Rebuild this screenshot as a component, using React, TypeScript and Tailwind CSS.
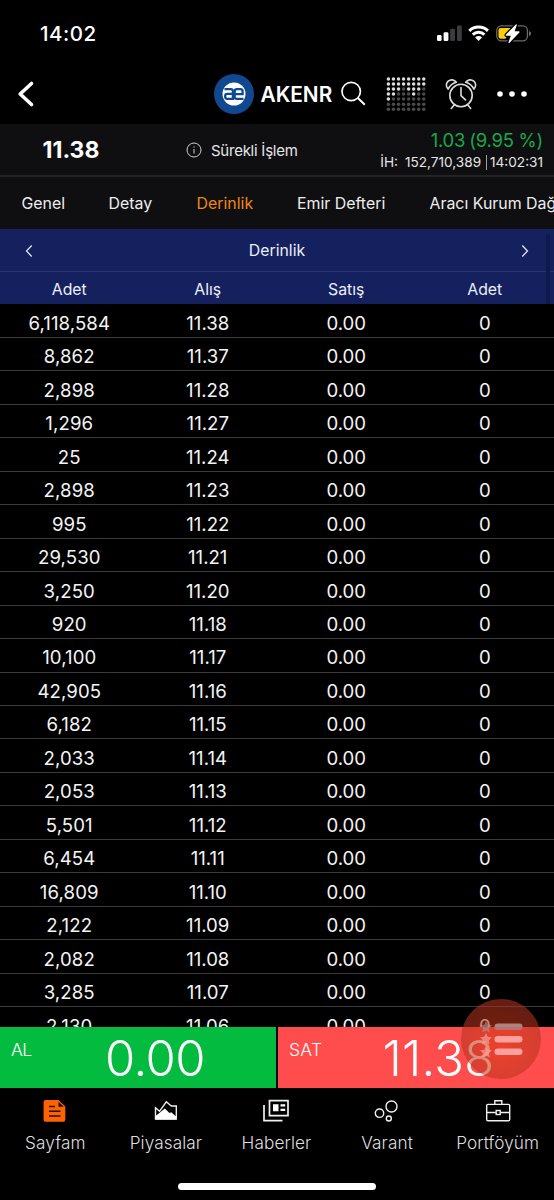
import { ReactNode } from "react";
import clsx from "clsx";

const ROWS: [string, string][] = [
  ["6,118,584", "11.38"],
  ["8,862", "11.37"],
  ["2,898", "11.28"],
  ["1,296", "11.27"],
  ["25", "11.24"],
  ["2,898", "11.23"],
  ["995", "11.22"],
  ["29,530", "11.21"],
  ["3,250", "11.20"],
  ["920", "11.18"],
  ["10,100", "11.17"],
  ["42,905", "11.16"],
  ["6,182", "11.15"],
  ["2,033", "11.14"],
  ["2,053", "11.13"],
  ["5,501", "11.12"],
  ["6,454", "11.11"],
  ["16,809", "11.10"],
  ["2,122", "11.09"],
  ["2,082", "11.08"],
  ["3,285", "11.07"],
  ["2,130", "11.06"],
];

// 1 = lit dot
const DOTS = ["11111111", "11111111", "11101110", "11000100", "10000000", "00000000", "00000000"];

const StatusBar = () => (
  <div className="flex h-[64px] items-center pt-[4px] pl-[40px]">
    <span className="w-[396px] text-[20.5px] font-medium tracking-[0.5px]">14:02</span>
    <svg width="98" height="24" viewBox="0 0 98 24" fill="none">
      <rect x="1" y="13" width="4.6" height="6" rx="1.3" fill="#fff" />
      <rect x="7.6" y="10.2" width="4.8" height="8.8" rx="1.3" fill="#fff" />
      <rect x="14.2" y="6.8" width="4.8" height="12.2" rx="1.3" fill="#3c3c3e" />
      <rect x="21" y="3.4" width="4.8" height="15.6" rx="1.3" fill="#3c3c3e" />
      <g stroke="#fff" strokeWidth="3">
        <path d="M33.3 8.8a13.6 13.6 0 0 1 18.6 0" />
        <path d="M36.8 12.6a8.4 8.4 0 0 1 11.6 0" />
      </g>
      <path d="M42.6 19 39.2 15.4a4.8 4.8 0 0 1 6.8 0z" fill="#fff" />
      <rect x="60.8" y="3.8" width="30.6" height="15" rx="4.6" stroke="#6b6b6d" strokeWidth="1.3" />
      <path d="M93 9v5c1.3-.5 2.1-1.4 2.1-2.5S94.3 9.5 93 9z" fill="#6b6b6d" />
      <path d="M64.8 6H76l-6.5 10.7h-4.7a2.3 2.3 0 0 1-2.3-2.3V8.3A2.3 2.3 0 0 1 64.8 6z" fill="#fecd0a" />
      <path
        d="M79.8 2.5 70 12.6c-.5.6-.2 1.200.5 1.200h4.300l-2.300 6.400c-.3.900.5 1.200 1.100.6l9.700-10.300c.5-.6.2-1.200-.5-1.200h-4.200l2.200-6.200c.3-.8-.4-1.200-1-.6z"
        fill="#fff"
        stroke="#000"
        strokeWidth="2.6"
        paintOrder="stroke"
      />
    </svg>
  </div>
);

const Logo = () => (
  <svg width="40" height="40" viewBox="0 0 40 40" fill="none">
    <circle cx="20" cy="20" r="20" fill="#10498f" />
    <circle cx="20" cy="20" r="11.5" fill="#fff" />
    <g stroke="#10498f" strokeWidth="2.3">
      <path d="M10.500 15.200h6.200q2.200 0 2.200 2v7.600h-5.700q-2 0-2-2v-.9q0-2 2-2h5.700" />
      <path d="M20.700 24.500v-7.200q0-2.100 2.100-2.100h3.600q2.200 0 2.200 2.100v2.800h-7.500M20.700 23q0 1.900 2 1.900h6.800" />
    </g>
  </svg>
);

const DotGrid = () => (
  <svg width="40" height="36" viewBox="0 0 40 36">
    {DOTS.map((line, y) =>
      line.split("").map((dot, x) => (
        <circle
          key={`${x}-${y}`}
          cx={2.4 + x * 5.05}
          cy={3 + y * 5.03}
          r="1.75"
          fill={dot === "1" ? "#dedede" : "#4b4b4b"}
        />
      ))
    )}
  </svg>
);

const AlarmIcon = () => (
  <svg width="32" height="32" viewBox="0 0 32 32" fill="none" stroke="#dcdcdc" strokeWidth="1.6">
    <circle cx="16" cy="17.5" r="11.2" />
    <path d="M16 9.5v8.1l4.500 4.300M9.300 26.800l-3 3.700M22.700 26.800l3 3.700" strokeLinecap="round" />
    <path
      d="M3.100 11.100C.5 8.300 1 5.100 3.200 3.200 5.800 1 9.400 1.600 11.300 4.300 7.600 5.300 4.700 7.700 3.100 11.100zM28.900 11.100c2.600-2.800 2.100-6-.1-7.900-2.600-2.200-6.200-1.600-8.100 1.100 3.700 1 6.600 3.400 8.200 6.800z"
      strokeLinejoin="round"
    />
  </svg>
);

const Header = () => (
  <div className="flex h-[60px] items-center pl-[17px]">
    <svg width="18" height="28" viewBox="0 0 18 28" fill="none">
      <path d="M14.500 3.500 3.200 14l11.300 10.500" stroke="#fff" strokeWidth="3.6" strokeLinecap="round" strokeLinejoin="round" />
    </svg>
    <div className="ml-[178.5px] flex items-center">
      <Logo />
      <span className="ml-[7px] w-[80px] pt-px text-[20.8px] font-semibold">AKENR</span>
      <svg width="26" height="26" viewBox="0 0 26 26" fill="none" stroke="#fff" strokeWidth="1.7">
        <circle cx="10.2" cy="10.5" r="9.2" />
        <path d="m16.900 17 6.900 6.700" strokeWidth="2" />
      </svg>
    </div>
    <div className="ml-[19.5px] flex items-center">
      <DotGrid />
      <div className="ml-[19px]">
        <AlarmIcon />
      </div>
      <svg className="ml-[19px]" width="32" height="8" viewBox="0 0 32 8" fill="#fff">
        <circle cx="4" cy="4" r="2.8" />
        <circle cx="16" cy="4" r="2.8" />
        <circle cx="28" cy="4" r="2.8" />
      </svg>
    </div>
  </div>
);

const PriceBar = () => (
  <div className="flex h-[53px] items-center border-b-2 border-[#242426] bg-[#0f0f11]">
    <span className="w-[142px] pt-[2px] text-center text-[23px] font-bold">11.38</span>
    <div className="ml-[44px] flex items-center gap-[9px]">
      <svg width="16" height="16" viewBox="0 0 16 16" fill="none" stroke="#cfcfcf">
        <circle cx="8" cy="8" r="7" />
        <path d="M8 7v4.500M8 4.300v1.300" />
      </svg>
      <span className="pt-[3px] text-[15px] tracking-[-0.25px] whitespace-nowrap text-[#e6e6e6]">Sürekli İşlem</span>
    </div>
    <div className="ml-auto flex flex-col items-end pt-px pr-[11px] whitespace-nowrap">
      <div className="flex gap-[4px] text-[18.5px] leading-[24px] tracking-[-0.25px] text-[#18a84a]">
        <span>1.03</span>
        <span>(9.95 %)</span>
      </div>
      <div className="flex items-center text-[13.6px] leading-[20px] text-[#e6e6e6]">
        <span>İH:</span>
        <span className="ml-[7px]">152,710,389</span>
        <span className="mr-[3px] ml-[5px] h-[15px] w-px bg-[#a0a0a0]" />
        <span>14:02:31</span>
      </div>
    </div>
  </div>
);

const Tabs = () => (
  <div className="flex h-[52px] items-center overflow-hidden bg-[#0f0f11] pt-px pl-[21.5px] text-[15.9px] whitespace-nowrap text-[#ededed]">
    <span className="w-[87px] shrink-0">Genel</span>
    <span className="w-[88px] shrink-0">Detay</span>
    <span className="w-[100.5px] shrink-0 text-[#ee8711]">Derinlik</span>
    <span className="w-[132.5px] shrink-0">Emir Defteri</span>
    <span className="shrink-0">Aracı Kurum Dağılımı</span>
  </div>
);

const Arrow = ({ className }: { className?: string }) => (
  <svg className={className} width="8" height="14" viewBox="0 0 8 14" fill="none" stroke="#dfe3f5" strokeWidth="1.3">
    <path d="M6.700 1.500 1.500 7l5.200 5.500" />
  </svg>
);

const DepthTable = () => (
  <div className="h-[798px] overflow-hidden">
    <div className="relative bg-[#14215e] text-[15.8px] text-[#eceef8]">
      <div className="flex h-[42px] items-center justify-between px-[25px] pt-px">
        <Arrow />
        <span>Derinlik</span>
        <Arrow className="rotate-180" />
      </div>
      <div className="grid h-[33px] grid-cols-4 items-center border-t border-[#27346d] pt-[4px] text-center">
        <span>Adet</span>
        <span>Alış</span>
        <span>Satış</span>
        <span>Adet</span>
      </div>
      <div className="absolute top-[5px] right-[4px] bottom-0 w-[4px] bg-[#0f194a]" />
    </div>
    <div className="pt-[0.4px]">
      {ROWS.map(([amount, price]) => (
        <div
          key={price}
          className="grid h-[33.48px] grid-cols-4 items-center border-b border-[#3a3a3a] pt-[5.4px] text-center text-[18.6px] text-[#f4f4f4]"
        >
          <span className="tracking-[0.1px]">{amount}</span>
          <span>{price}</span>
          <span>0.00</span>
          <span>0</span>
        </div>
      ))}
    </div>
  </div>
);

const TradeButton = (props: { label: string; price: string; className: string }) => (
  <div className={clsx("flex h-[61px] text-white", props.className)}>
    <span className="mt-[11px] w-[40px] text-[17.5px] leading-[24px] font-light">{props.label}</span>
    <span className="flex-1 pt-[1px] text-center text-[49px] leading-[62px] font-[350]">{props.price}</span>
  </div>
);

const Star = ({ y, fill }: { y: number; fill: string }) => (
  <path
    transform={`translate(25 ${y})`}
    d="m0-6 1.800 3.800 4.200.5-3 3 .7 4.200L0 3.500l-3.700 2 .7-4.200-3-3 4.200-.5z"
    fill={fill}
  />
);

const FloatingMenu = () => (
  <svg className="absolute top-[999px] left-[461px]" width="80" height="80" viewBox="0 0 80 80">
    <defs>
      <radialGradient id="fab" cx="50%" cy="60%" r="55%">
        <stop offset="0" stopColor="#dc3a10" stopOpacity="0.55" />
        <stop offset="1" stopColor="#b0321f" stopOpacity="0.58" />
      </radialGradient>
      <linearGradient id="bar" x1="0" y1="0" x2="0" y2="1">
        <stop offset="0.5" stopColor="#a98480" />
        <stop offset="0.5" stopColor="#c0706c" />
      </linearGradient>
    </defs>
    <circle cx="40" cy="40" r="40" fill="url(#fab)" />
    <Star y={28} fill="#a7999a99" />
    <Star y={40} fill="#ffa0a0aa" />
    <Star y={53} fill="#ffa0a0aa" />
    <rect x="33.5" y="24.5" width="28" height="6.5" rx="3.2" fill="url(#bar)" />
    <rect x="33.5" y="37" width="28" height="6.5" rx="3.2" fill="#ffa09e" />
    <rect x="33.5" y="49.5" width="28" height="6.5" rx="3.2" fill="#ffa09e" />
  </svg>
);

const NavItem = ({ label, children }: { label: string; children: ReactNode }) => (
  <div className="flex w-[110.6px] flex-col items-center">
    <svg width="28" height="24" viewBox="0 0 28 24" fill="none" stroke="#f0f0f0" strokeWidth="1.4">
      {children}
    </svg>
    <span className="mt-[8.5px] text-[17.2px] leading-[24px] font-light tracking-[0.1px] text-[#dedede]">{label}</span>
  </div>
);

const BottomNav = () => (
  <div className="h-[112px]">
    <div className="flex pt-[9.5px]">
      <NavItem label="Sayfam">
        <path d="M4.500 1h13l6.800 6.500v13.200q0 2-2 2H4.500q-1.900 0-1.900-2V3q0-2 1.900-2z" fill="#ff6200" stroke="none" />
        <path d="M17.500 2.700v5H22.700z" fill="#111" stroke="none" />
        <path d="M8 7.500h6M8 12.200h11.500M8 17h11.500" stroke="#241008" strokeWidth="1.5" />
      </NavItem>
      <NavItem label="Piyasalar">
        <path d="M3.500 20V8.800l4 3.500 6.800-9.500 5 4.200h5V20z" />
        <path d="M3.500 20v-3l3.500-2.800 5.800-4.700 4.700 4.500 1.800-.7 5 4.500V20.500H3.500z" fill="#fff" stroke="none" />
      </NavItem>
      <NavItem label="Haberler">
        <path d="M7.500 1.700H26v15H7.500zM2 6v15.700h18.500" strokeWidth="1.7" />
        <path d="M11 5.200h5.500v7H11zM18.500 5.200h4.700v2.300h-4.700zM18.500 9.800h4.700v2.300h-4.700z" fill="#fff" stroke="none" />
      </NavItem>
      <NavItem label="Varant">
        <circle cx="18.5" cy="7.5" r="5.5" />
        <circle cx="6.5" cy="14.2" r="4.2" />
        <circle cx="15.8" cy="19.5" r="2.5" />
      </NavItem>
      <NavItem label="Portföyüm">
        <rect x="2.7" y="5.4" width="23" height="16.3" rx="1.2" />
        <path d="M10.800 5.200V1.700h7v3.500M2.700 13.500h9.200M16.500 13.500h9.200" />
        <rect x="12.2" y="11.5" width="4" height="4" />
      </NavItem>
    </div>
    <div className="mx-auto mt-[27.5px] h-[7px] w-[198px] rounded-full bg-white" />
  </div>
);

export default function App() {
  return (
    <div className="relative h-[1200px] w-[554px] overflow-hidden bg-black font-['Inter',sans-serif] text-white">
      <StatusBar />
      <Header />
      <PriceBar />
      <Tabs />
      <DepthTable />
      <div className="flex justify-between pb-px">
        <TradeButton label="AL" price="0.00" className="w-[276px] bg-[#03bb3e] pr-[17px] pl-[11px] tracking-[-0.5px]" />
        <TradeButton label="SAT" price="11.38" className="w-[276px] bg-[#ff4d4d] pr-[6px] pl-[11px] tracking-[0.3px]" />
      </div>
      <BottomNav />
      <FloatingMenu />
    </div>
  );
}
